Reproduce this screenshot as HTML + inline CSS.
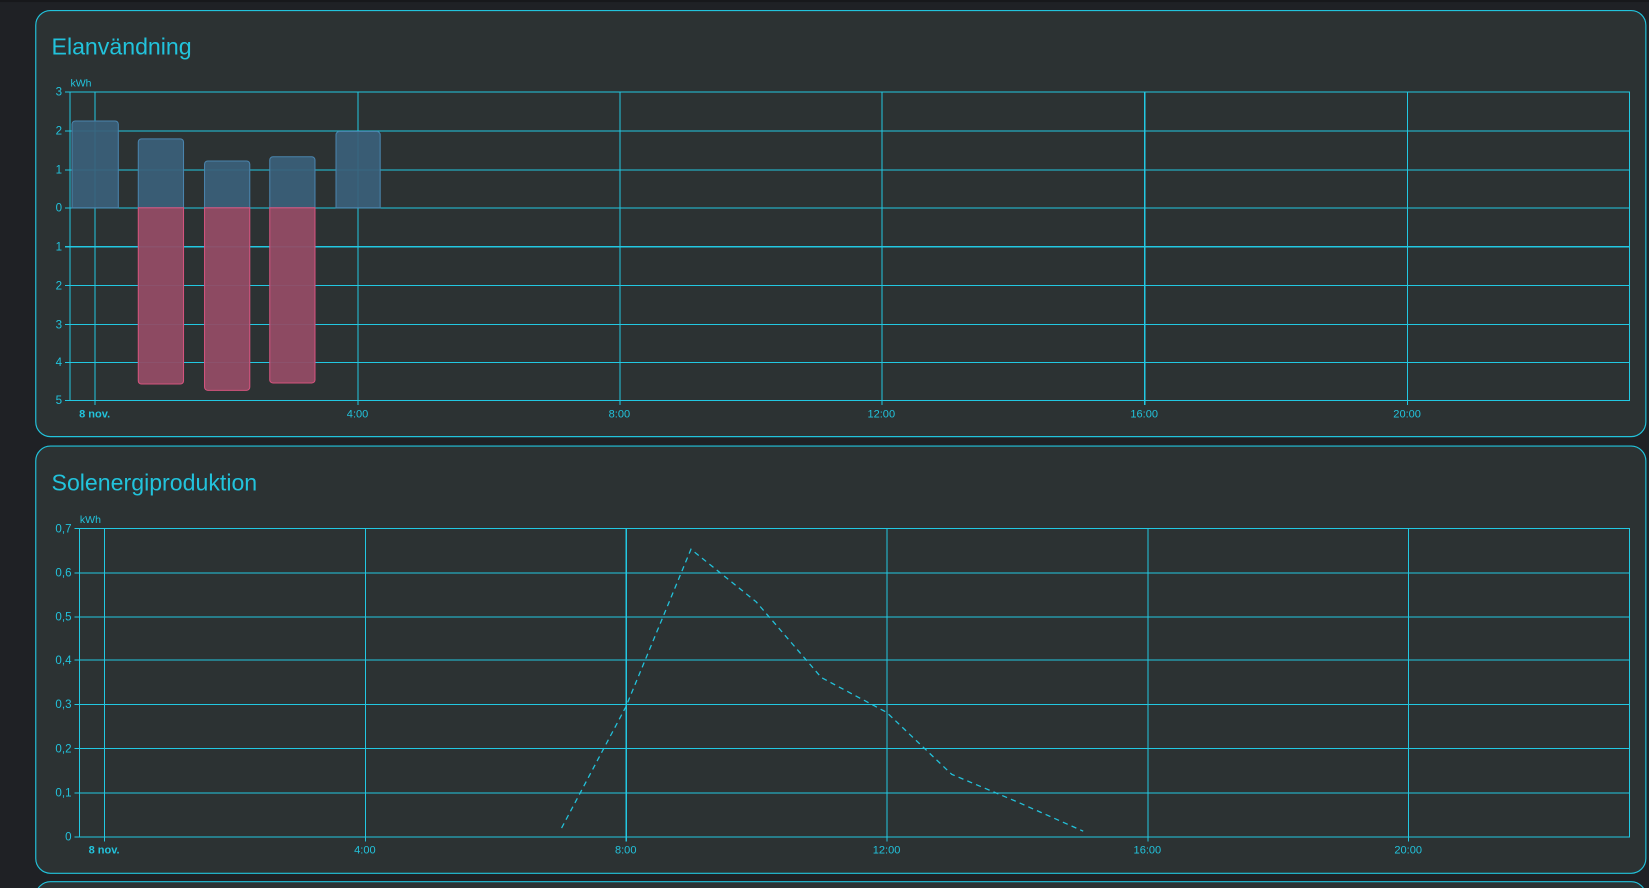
<!DOCTYPE html>
<html><head><meta charset="utf-8"><style>
html,body{margin:0;padding:0;background:#1f2125;width:1649px;height:888px;overflow:hidden}
svg{display:block}
text{font-family:"Liberation Sans",sans-serif;fill:#22c3dc}
</style></head><body>
<svg width="1649" height="888" viewBox="0 0 1568 844" preserveAspectRatio="none" xmlns="http://www.w3.org/2000/svg">
<rect x="0" y="0" width="1568" height="844" fill="#1f2125"/>
<rect x="0" y="0" width="1568" height="2" fill="#17181b"/>
<!-- cards -->
<rect x="34" y="10" width="1531" height="405" rx="14" fill="#2c3233" stroke="#22c3dc" stroke-width="1.1"/>
<rect x="34" y="424" width="1531" height="406" rx="14" fill="#2c3233" stroke="#22c3dc" stroke-width="1.1"/>
<rect x="34" y="838" width="1531" height="30" rx="14" fill="#2c3233" stroke="#22c3dc" stroke-width="1.1"/>

<text x="49" y="52" font-size="22">Elanvändning</text>
<text x="49" y="466" font-size="22">Solenergiproduktion</text>

<!-- chart 1 -->
<g stroke="#22c8e2" stroke-width="1" fill="none" shape-rendering="crispEdges">
<path d="M62 87.5H1549M62 124.5H1549M62 161.5H1549M62 197.5H1549M62 234.5H1549M62 271.5H1549M62 308.5H1549M62 344.5H1549M62 380.5H1549"/>
<path d="M66.5 87V381M90.5 87V385M340.5 87V385M589.5 87V385M838.5 87V385M1088.5 87V385M1338.5 87V385M1549.5 87V381"/>
</g>
<g font-size="11" text-anchor="end">
<text x="59" y="91">3</text><text x="59" y="128">2</text><text x="59" y="165">1</text><text x="59" y="201">0</text>
<text x="59" y="238">1</text><text x="59" y="275">2</text><text x="59" y="312">3</text><text x="59" y="348">4</text><text x="59" y="384">5</text>
</g>
<text x="67" y="82" font-size="10">kWh</text>
<g font-size="10.5" text-anchor="middle">
<text x="90" y="397" font-weight="bold">8 nov.</text><text x="340" y="397">4:00</text><text x="589" y="397">8:00</text>
<text x="838" y="397">12:00</text><text x="1088" y="397">16:00</text><text x="1338" y="397">20:00</text>
</g>
<g fill="#3b6079" fill-opacity="0.92" stroke="#4a84ad" stroke-width="1">
<path d="M68.5 197.5V118a3 3 0 0 1 3-3h38a3 3 0 0 1 3 3V197.5Z"/>
<path d="M131.5 197.5V135a3 3 0 0 1 3-3h37a3 3 0 0 1 3 3V197.5Z"/>
<path d="M194.5 197.5V156a3 3 0 0 1 3-3h37a3 3 0 0 1 3 3V197.5Z"/>
<path d="M256.5 197.5V152a3 3 0 0 1 3-3h37a3 3 0 0 1 3 3V197.5Z"/>
<path d="M319.5 197.5V128a3 3 0 0 1 3-3h36a3 3 0 0 1 3 3V197.5Z"/>
</g>
<g fill="#924c65" fill-opacity="0.95" stroke="#d4547e" stroke-width="1">
<path d="M131.5 197.5V362a3 3 0 0 0 3 3h37a3 3 0 0 0 3-3V197.5Z"/>
<path d="M194.5 197.5V368a3 3 0 0 0 3 3h37a3 3 0 0 0 3-3V197.5Z"/>
<path d="M256.5 197.5V361a3 3 0 0 0 3 3h37a3 3 0 0 0 3-3V197.5Z"/>
</g>

<!-- chart 2 -->
<g stroke="#22c8e2" stroke-width="1" fill="none" shape-rendering="crispEdges">
<path d="M71 502.5H1549M71 544.5H1549M71 586.5H1549M71 627.5H1549M71 669.5H1549M71 711.5H1549M71 753.5H1549M71 795.5H1549"/>
<path d="M75.5 502V796M99.5 502V800M347.5 502V800M595.5 502V800M843.5 502V800M1091.5 502V800M1339.5 502V800M1549.5 502V796"/>
</g>
<g font-size="11" text-anchor="end">
<text x="68" y="506">0,7</text><text x="68" y="548">0,6</text><text x="68" y="590">0,5</text><text x="68" y="631">0,4</text>
<text x="68" y="673">0,3</text><text x="68" y="715">0,2</text><text x="68" y="757">0,1</text><text x="68" y="799">0</text>
</g>
<text x="76" y="497" font-size="10">kWh</text>
<g font-size="10.5" text-anchor="middle">
<text x="99" y="811" font-weight="bold">8 nov.</text><text x="347" y="811">4:00</text><text x="595" y="811">8:00</text>
<text x="843" y="811">12:00</text><text x="1091" y="811">16:00</text><text x="1339" y="811">20:00</text>
</g>
<polyline points="534,787 595,672 657,522 719,572 781,644 843,677 905,736 967,762 1030,790" fill="none" stroke="#22c3dc" stroke-width="1.2" stroke-dasharray="5,4"/>
</svg>
</body></html>
